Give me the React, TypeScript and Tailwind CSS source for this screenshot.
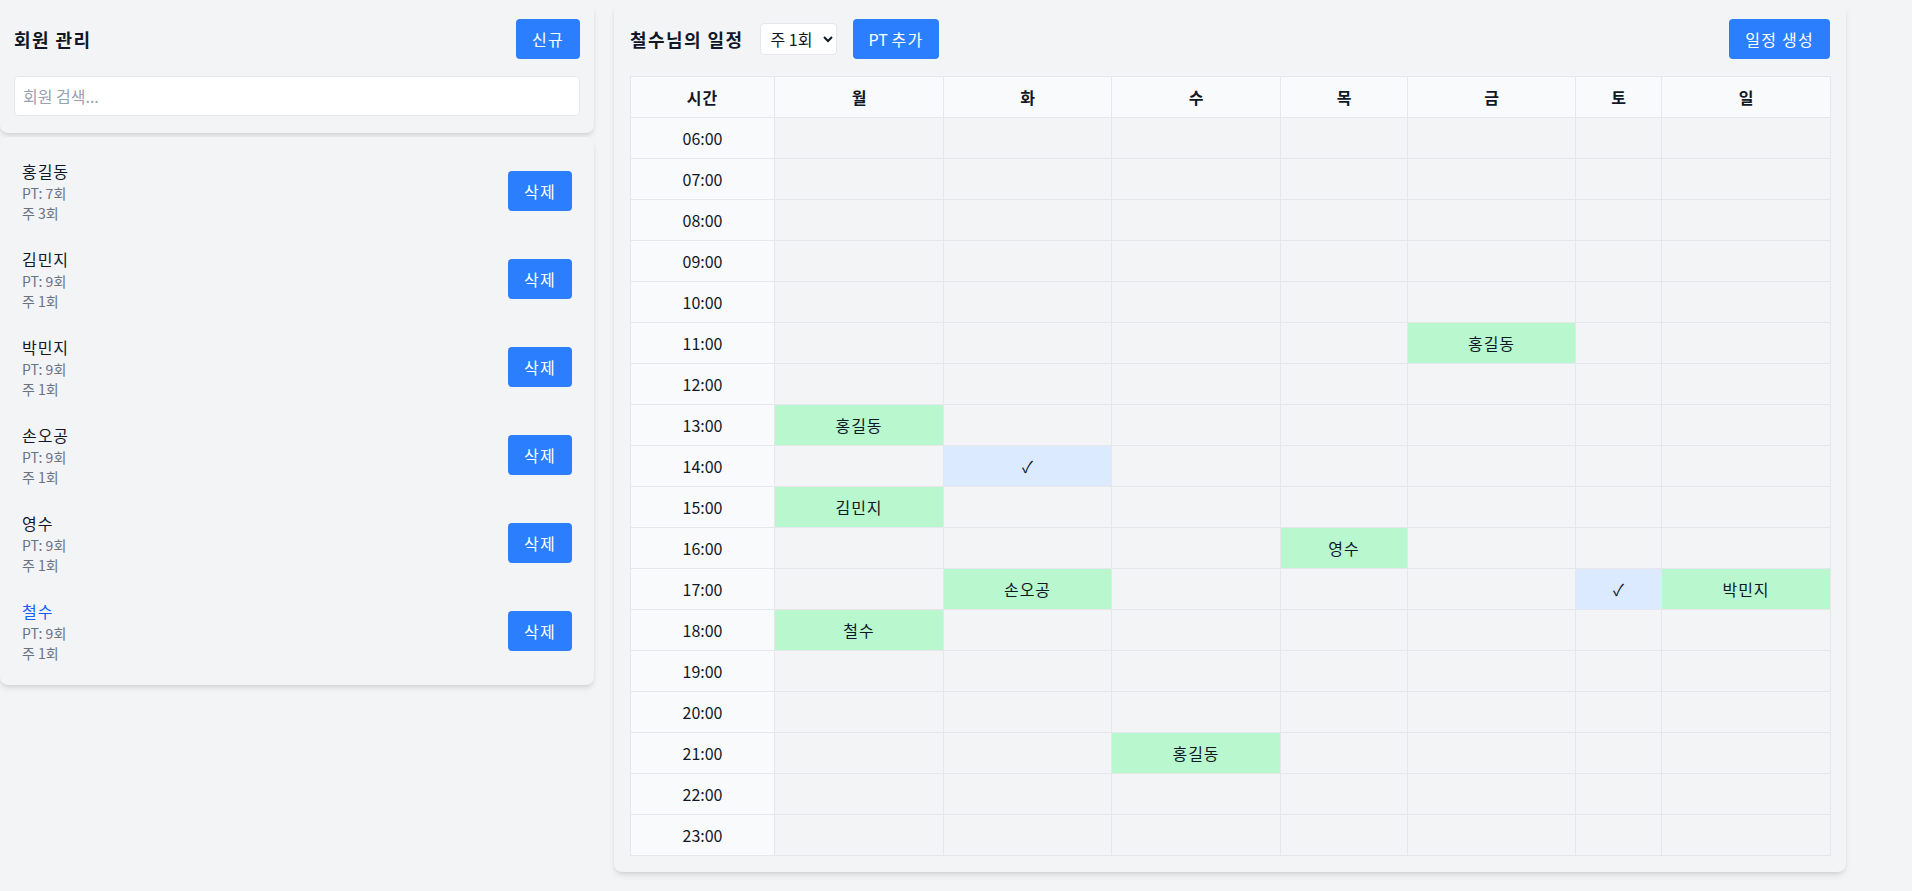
import React, { useState } from "react";

type Member = { name: string; pt: number; perWeek: number };

const members: Member[] = [
  { name: "홍길동", pt: 7, perWeek: 3 },
  { name: "김민지", pt: 9, perWeek: 1 },
  { name: "박민지", pt: 9, perWeek: 1 },
  { name: "손오공", pt: 9, perWeek: 1 },
  { name: "영수", pt: 9, perWeek: 1 },
  { name: "철수", pt: 9, perWeek: 1 },
];

const days = ["월", "화", "수", "목", "금", "토", "일"];
const hours = Array.from({ length: 18 }, (_, i) => i + 6); // 06:00 ~ 23:00

// key = "hour-dayIndex"
const booked: Record<string, string> = {
  "11-4": "홍길동",
  "13-0": "홍길동",
  "15-0": "김민지",
  "16-3": "영수",
  "17-1": "손오공",
  "17-6": "박민지",
  "18-0": "철수",
  "21-2": "홍길동",
};

// picked slots for the selected member
const picked = ["14-1", "17-5"];

const btn = "px-4 py-2 bg-blue-500 text-white rounded";

const App = () => {
  const [selected] = useState("철수");
  const [search, setSearch] = useState("");

  const formatHour = (h: number) => `${h.toString().padStart(2, "0")}:00`;

  return (
    <div className="min-h-screen bg-gray-100 pt-[3px] flex items-start gap-5 font-['Noto_Sans_CJK_KR',sans-serif] text-gray-900">
      {/* left: member list */}
      <div className="w-[594px] flex flex-col gap-1">
        <div className="bg-gray-100 rounded-lg shadow-md px-3.5 pt-4 pb-[17px]">
          <div className="flex items-center justify-between mb-[17px]">
            <h2 className="text-lg font-bold tracking-[0.08em]">회원 관리</h2>
            <button className={btn}>
              <span className="tracking-[0.08em]">신규</span>
            </button>
          </div>
          <input
            value={search}
            onChange={(e) => setSearch(e.target.value)}
            placeholder="회원 검색..."
            className="w-full h-10 px-2 bg-white border border-gray-200 rounded placeholder:text-gray-400 outline-none"
          />
        </div>

        <div className="bg-gray-100 rounded-lg shadow-md p-2.5">
          {members.map((m) => (
            <div key={m.name} className="flex items-center justify-between px-3 py-3">
              <div>
                <div className={(m.name === selected ? "text-blue-600" : "text-gray-900") + " tracking-[0.06em]"}>
                  {m.name}
                </div>
                <div className="text-sm text-gray-500">PT: {m.pt}회</div>
                <div className="text-sm text-gray-500">주 {m.perWeek}회</div>
              </div>
              <button className={btn}>
                <span className="tracking-[0.08em]">삭제</span>
              </button>
            </div>
          ))}
        </div>
      </div>

      {/* right: schedule */}
      <div className="w-[1232px] bg-gray-100 rounded-lg shadow-md px-4 pt-4 pb-4">
        <div className="flex items-center justify-between mb-[17px]">
          <div className="flex items-center gap-4">
            <h2 className="text-lg font-bold tracking-[0.08em]">{selected}님의 일정</h2>
            <select className="w-[77px] h-8 px-1.5 bg-white border border-gray-200 rounded text-base">
              <option>주 1회</option>
              <option>주 2회</option>
              <option>주 3회</option>
            </select>
            <button className={btn}>
              PT <span className="tracking-[0.08em]">추가</span>
            </button>
          </div>
          <button className={btn}>
            <span className="tracking-[0.08em]">일정 생성</span>
          </button>
        </div>

        <table className="table-fixed w-[1200px] border-collapse">
          <colgroup>
            <col className="w-[144px]" />
            <col className="w-[169px]" />
            <col className="w-[168px]" />
            <col className="w-[169px]" />
            <col className="w-[127px]" />
            <col className="w-[168px]" />
            <col className="w-[86px]" />
            <col className="w-[169px]" />
          </colgroup>
          <thead>
            <tr className="bg-gray-50">
              <th className="border border-gray-200 py-2 font-bold tracking-[0.06em]">시간</th>
              {days.map((d) => (
                <th key={d} className="border border-gray-200 py-2 font-bold">
                  {d}
                </th>
              ))}
            </tr>
          </thead>
          <tbody>
            {hours.map((h) => (
              <tr key={h}>
                <td className="border border-gray-200 py-2 text-center bg-gray-50">{formatHour(h)}</td>
                {days.map((d, i) => {
                  const key = `${h}-${i}`;
                  const name = booked[key];
                  const isPicked = picked.includes(key);
                  let cls = "border border-gray-200 py-2 text-center h-10";
                  if (name) cls += " bg-green-200 tracking-[0.06em]";
                  else if (isPicked) cls += " bg-blue-100";
                  return (
                    <td key={d} className={cls}>
                      {name ? name : isPicked ? "✓" : ""}
                    </td>
                  );
                })}
              </tr>
            ))}
          </tbody>
        </table>
      </div>
    </div>
  );
};

export default App;
